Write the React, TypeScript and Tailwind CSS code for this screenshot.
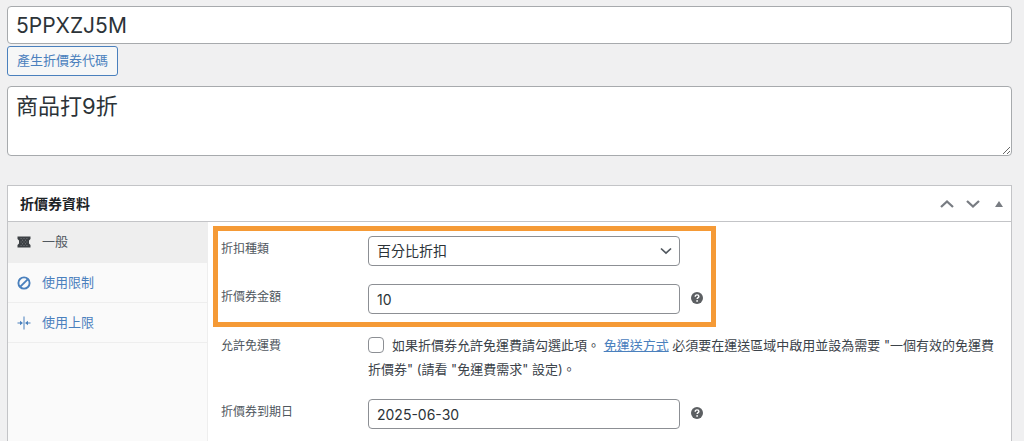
import type { ReactNode } from "react";

const fieldClass =
  "h-[30px] w-full rounded border border-[#8c8f94] bg-white px-2 text-sm text-[#2c3338] outline-none";

function TicketIcon() {
  return (
    <svg viewBox="0 0 14 12" className="h-3 w-3.5 shrink-0" fill="currentColor" aria-hidden="true">
      <path d="M.5.5h13v2.600L12 4.500v3l1.500 1.400v2.600H.5V8.900L2 7.500v-3L.5 3.100z" />
      <path
        d="M3.600 2.500h1M6.500 2.500h1M9.400 2.500h1M5 4.250h1M8 4.250h1M3.600 6h1M6.500 6h1M9.400 6h1M5 7.750h1M8 7.750h1M3.600 9.500h1M6.500 9.500h1M9.400 9.500h1"
        stroke="#84878a"
        strokeWidth="0.8"
      />
    </svg>
  );
}

function BlockedIcon() {
  return (
    <svg viewBox="0 0 14 14" className="size-3.5 shrink-0" fill="none" stroke="currentColor" strokeWidth="1.900" aria-hidden="true">
      <circle cx="7" cy="7" r="5.600" />
      <path d="M3.300 10.700l7.400-7.400" />
    </svg>
  );
}

function LimitIcon() {
  return (
    <svg viewBox="0 0 14 14" className="size-3.5 shrink-0" fill="currentColor" aria-hidden="true">
      <path d="M6.500 .5h1v13h-1zM.5 6.500h2.500V4.800L6 7 3 9.200V7.500H.5zM13.500 6.500H11V4.800L8 7l3 2.200V7.500h2.500z" />
    </svg>
  );
}

function Chevron({ up = false }: { up?: boolean }) {
  return (
    <svg viewBox="0 0 14 10" className="h-2.5 w-3.5" fill="none" stroke="currentColor" strokeWidth="2.300" aria-hidden="true">
      <path d={up ? "M1 8l6-5.500L13 8" : "M1 2l6 5.500L13 2"} />
    </svg>
  );
}

function Help() {
  return (
    <button type="button" aria-label="說明" className="mt-2 ml-[11px] shrink-0 text-[#5c5f62]">
      <svg viewBox="0 0 12 12" className="block size-3" aria-hidden="true">
        <circle cx="6" cy="6" r="6" fill="currentColor" />
        <path
          d="M4.200 4.700C4.200 3.500 5 2.900 6.050 2.900s1.850.6 1.850 1.550c0 1.150-1.750 1.150-1.750 2.450"
          fill="none"
          stroke="#fff"
          strokeWidth="1.400"
        />
        <circle cx="6.100" cy="8.900" r="0.900" fill="#fff" />
      </svg>
    </button>
  );
}

function Row({ id, label, children }: { id: string; label: string; children: ReactNode }) {
  return (
    <div className="flex">
      <label htmlFor={id} className="w-[147px] shrink-0 pt-1 text-xs leading-[18px] text-[#50575e]">
        {label}
      </label>
      {children}
    </div>
  );
}

function Tab({ icon, label, active = false }: { icon: ReactNode; label: string; active?: boolean }) {
  return (
    <li>
      <a
        href="#"
        className={
          active
            ? "flex h-[41px] items-center gap-[11px] border-b border-[#eeeeee] bg-[#eeeeee] pl-[9px] text-[#50575e]"
            : "flex h-10 items-center gap-[11px] border-b border-[#eeeeee] pl-[9px] text-[#4a80bd]"
        }
      >
        <span className={active ? "text-[#3c4044]" : ""}>{icon}</span>
        {label}
      </a>
    </li>
  );
}

export default function App() {
  return (
    <div
      lang="zh-Hant"
      className="flex min-h-screen flex-col bg-[#f0f0f1] pt-1.5 pr-3 pl-[7px] font-['Inter','Noto_Sans_CJK_TC',sans-serif] text-[13px] text-[#3c434a]"
    >
      <input
        aria-label="折價券代碼"
        defaultValue="5PPXZJ5M"
        className="h-[38px] w-full rounded border border-[#a7aaad] bg-white px-2 text-[21px] text-[#2c3338] outline-none"
      />
      <button
        type="button"
        className="mt-0.5 h-[30px] self-start rounded-[3px] border border-[#4a80bd] bg-[#f6f7f7] px-[9px] text-[#4a80bd]"
      >
        產生折價券代碼
      </button>
      <textarea
        aria-label="描述"
        defaultValue="商品打9折"
        className="mt-2.5 h-[70px] w-full resize-y rounded border border-[#a7aaad] bg-white px-2 py-1 text-[22px] leading-[30px] text-[#2c3338] outline-none"
      />

      <section className="mt-[29px] flex flex-1 flex-col border border-b-0 border-[#c3c4c7] bg-white">
        <header className="flex h-9 items-center justify-between border-b border-[#c3c4c7] pr-2 pl-3">
          <h2 className="text-sm font-bold text-[#1d2327]">折價券資料</h2>
          <div className="flex items-center gap-3 text-[#787c82]">
            <button type="button" aria-label="上移">
              <Chevron up />
            </button>
            <button type="button" aria-label="下移">
              <Chevron />
            </button>
            <button type="button" aria-label="收合" className="ml-[3px]">
              <svg viewBox="0 0 8 6" className="h-1.5 w-2" fill="currentColor" aria-hidden="true">
                <path d="M4 0l4 6H0z" />
              </svg>
            </button>
          </div>
        </header>

        <div className="flex flex-1">
          <ul className="w-[200px] shrink-0 border-r border-[#eeeeee] bg-[#fafafa]">
            <Tab icon={<TicketIcon />} label="一般" active />
            <Tab icon={<BlockedIcon />} label="使用限制" />
            <Tab icon={<LimitIcon />} label="使用上限" />
          </ul>

          <div className="min-w-0 flex-1 pt-1 pr-4 pb-2.5 pl-[5px]">
            <div className="flex w-fit flex-col gap-[18px] border-[5px] border-[#f59a36] pt-[5px] pr-2 pb-2 pl-[3px]">
              <Row id="type" label="折扣種類">
                <div className="relative w-[312px]">
                  <select id="type" className={`${fieldClass} appearance-none`}>
                    <option>百分比折扣</option>
                  </select>
                  <svg
                    viewBox="0 0 12 8"
                    className="pointer-events-none absolute top-[11px] right-2 h-2 w-3"
                    fill="none"
                    stroke="#50575e"
                    strokeWidth="1.700"
                    aria-hidden="true"
                  >
                    <path d="M1 1.500l5 4.700 5-4.700" />
                  </svg>
                </div>
              </Row>
              <Row id="amount" label="折價券金額">
                <div className="flex items-start">
                  <div className="w-[312px]">
                    <input id="amount" defaultValue="10" className={fieldClass} />
                  </div>
                  <Help />
                </div>
              </Row>
            </div>

            <div className="mt-[6px] flex flex-col gap-[18px] pl-2">
              <Row id="free" label="允許免運費">
                <p className="min-w-0 flex-1 leading-6">
                  <input
                    id="free"
                    type="checkbox"
                    className="mr-2 size-4 appearance-none rounded border border-[#8c8f94] bg-white align-[-3px]"
                  />
                  <label htmlFor="free">如果折價券允許免運費請勾選此項。</label>{" "}
                  <a href="#" className="text-[#4a80bd] underline">
                    免運送方式
                  </a>{" "}
                  必須要在運送區域中啟用並設為需要 "一個有效的免運費折價券" (請看 "免運費需求" 設定)。
                </p>
              </Row>
              <Row id="expiry" label="折價券到期日">
                <div className="flex items-start">
                  <div className="w-[312px]">
                    <input id="expiry" defaultValue="2025-06-30" className={fieldClass} />
                  </div>
                  <Help />
                </div>
              </Row>
            </div>
          </div>
        </div>
      </section>
    </div>
  );
}
